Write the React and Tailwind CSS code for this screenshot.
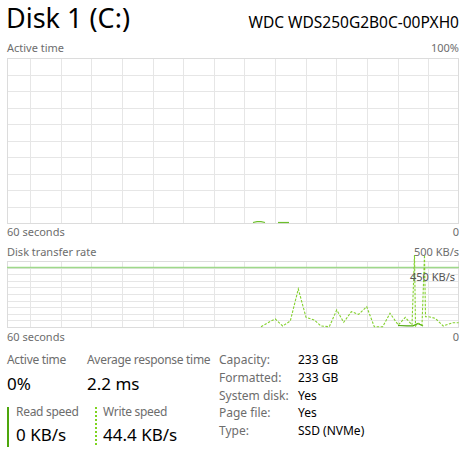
import React from "react";

const FONT = { fontFamily: '"Noto Sans", "Open Sans", sans-serif' };

function Grid({ height, rows }) {
  const W = 452;
  const vx = [];
  for (let k = 0; k < 14; k++) vx.push(Math.round(23 + k * 30.64) + 0.5);
  const hy = [];
  for (let k = 1; k < rows; k++) hy.push(Math.round(k * ((height - 1) / rows)) + 0.5);
  return (
    <g shapeRendering="crispEdges">
      {vx.map((x) => (
        <line key={"v" + x} x1={x} y1={0} x2={x} y2={height} stroke="#e6e6e6" strokeWidth="1" />
      ))}
      {hy.map((y) => (
        <line key={"h" + y} x1={0} y1={y} x2={W} y2={y} stroke="#e6e6e6" strokeWidth="1" />
      ))}
      <rect x="0.5" y="0.5" width={W - 1} height={height - 1} fill="none" stroke="#dcdcdc" strokeWidth="1" />
    </g>
  );
}

function ActiveGraph() {
  return (
    <svg width="452" height="166" className="block">
      <Grid height={166} rows={10} />
      <path d="M246 164.5 L250 163.6 L254 163.6 L258 164.5" fill="none" stroke="#6cbf2b" strokeWidth="1.2" />
      <path d="M271 164.5 L282 164.5" fill="none" stroke="#6cbf2b" strokeWidth="1.2" />
    </svg>
  );
}

const dashedPts = [
  [254, 65.7], [264, 60], [268.3, 58], [275.7, 65], [283.3, 60], [291.3, 28], [299, 56.3],
  [307.3, 59], [314, 65], [322.3, 65.7], [329.7, 49], [336.7, 61.3], [344.3, 50.7], [351.7, 53.3],
  [359.7, 45.7], [367.3, 65.7], [375.7, 65.7], [383, 52.3], [391.3, 64], [398.3, 56.3], [405, 64],
  [407.5, -6], [408.5, 65], [411.7, 62.3], [415, 64], [417.5, -6], [418.5, 55.7], [421.7, 55.7],
  [428.3, 57.3], [436.3, 65], [445.7, 61.7], [451.7, 61.7],
];

function TransferGraph() {
  return (
    <div className="relative h-[67px] w-[452px]">
      <svg width="452" height="67" className="block overflow-visible">
        <Grid height={67} rows={10} />
        <line x1="0" y1="6.5" x2="452" y2="6.5" stroke="#9fd98a" strokeWidth="1.3" />
        <polyline
          points="391,64.5 400,64.8 406,64.8 411,62.5 416,65"
          fill="none"
          stroke="#4da60c"
          strokeWidth="1.2"
        />
        <polyline
          points={dashedPts.map((p) => p.join(",")).join(" ")}
          fill="none"
          stroke="#84d12f"
          strokeWidth="1.1"
          strokeDasharray="2.5 1.5"
        />
      </svg>
      <span className="absolute right-[4px] top-[9px] text-[11px] leading-[14px] text-[#555]">450 KB/s</span>
    </div>
  );
}

export default function App() {
  return (
    <div className="w-[472px] h-[458px] bg-white pl-[7px] pr-[13px] text-black overflow-hidden" style={FONT}>
      {/* Title */}
      <div className="flex h-[36px] items-baseline justify-between">
        <span className="text-[27px] leading-[36px] -ml-[1px]">Disk 1 (C:)</span>
        <span className="text-[15.5px] leading-[20px]">WDC WDS250G2B0C-00PXH0</span>
      </div>

      {/* Active time label */}
      <div className="flex h-[22px] justify-between pt-[4px] text-[11px] leading-[16px] text-[#6d6d6d]">
        <span>Active time</span>
        <span>100%</span>
      </div>
      <ActiveGraph />
      <div className="flex justify-between text-[11px] leading-[16px] text-[#6d6d6d]">
        <span>60 seconds</span>
        <span>0</span>
      </div>

      {/* Transfer rate */}
      <div className="mt-[4px] flex justify-between text-[11px] leading-[16px] text-[#6d6d6d]">
        <span>Disk transfer rate</span>
        <span>500 KB/s</span>
      </div>
      <div className="mt-[1px]">
        <TransferGraph />
      </div>
      <div className="flex justify-between pt-[1px] text-[11px] leading-[16px] text-[#6d6d6d]">
        <span>60 seconds</span>
        <span>0</span>
      </div>

      {/* Stats */}
      <div className="mt-[6px] flex">
        <div className="w-[212px] flex flex-col">
          <div className="flex">
            <div className="w-[80px]">
              <div className="text-[12px] leading-[18px] tracking-[-0.3px] text-[#6d6d6d]">Active time</div>
              <div className="text-[17px] leading-[30px]">0%</div>
            </div>
            <div>
              <div className="text-[12px] leading-[18px] tracking-[-0.3px] whitespace-nowrap text-[#6d6d6d]">Average response time</div>
              <div className="text-[17px] leading-[30px]">2.2 ms</div>
            </div>
          </div>
          <div className="mt-[8px] flex">
            <div className="flex h-[40px] w-[88px]">
              <div className="w-[2px] h-[40px] bg-[#4da60c]" />
              <div className="pl-[7px]">
                <div className="text-[12px] leading-[10px] tracking-[-0.3px] text-[#6d6d6d]">Read speed</div>
                <div className="text-[17px] leading-[36px] whitespace-nowrap">0 KB/s</div>
              </div>
            </div>
            <div className="flex h-[40px]">
              <div className="w-[2px] h-[40px] bg-[repeating-linear-gradient(to_bottom,#7ed321_0px,#7ed321_2px,transparent_2px,transparent_4px)]" />
              <div className="pl-[6px]">
                <div className="text-[12px] leading-[10px] tracking-[-0.3px] text-[#6d6d6d]">Write speed</div>
                <div className="text-[17px] leading-[36px] whitespace-nowrap">44.4 KB/s</div>
              </div>
            </div>
          </div>
        </div>
        <div className="text-[12px] leading-[17.75px]">
          {[
            ["Capacity:", "233 GB"],
            ["Formatted:", "233 GB"],
            ["System disk:", "Yes"],
            ["Page file:", "Yes"],
            ["Type:", "SSD (NVMe)"],
          ].map(([k, v]) => (
            <div key={k} className="flex">
              <span className="w-[79px] text-[#6d6d6d]">{k}</span>
              <span>{v}</span>
            </div>
          ))}
        </div>
      </div>
    </div>
  );
}
